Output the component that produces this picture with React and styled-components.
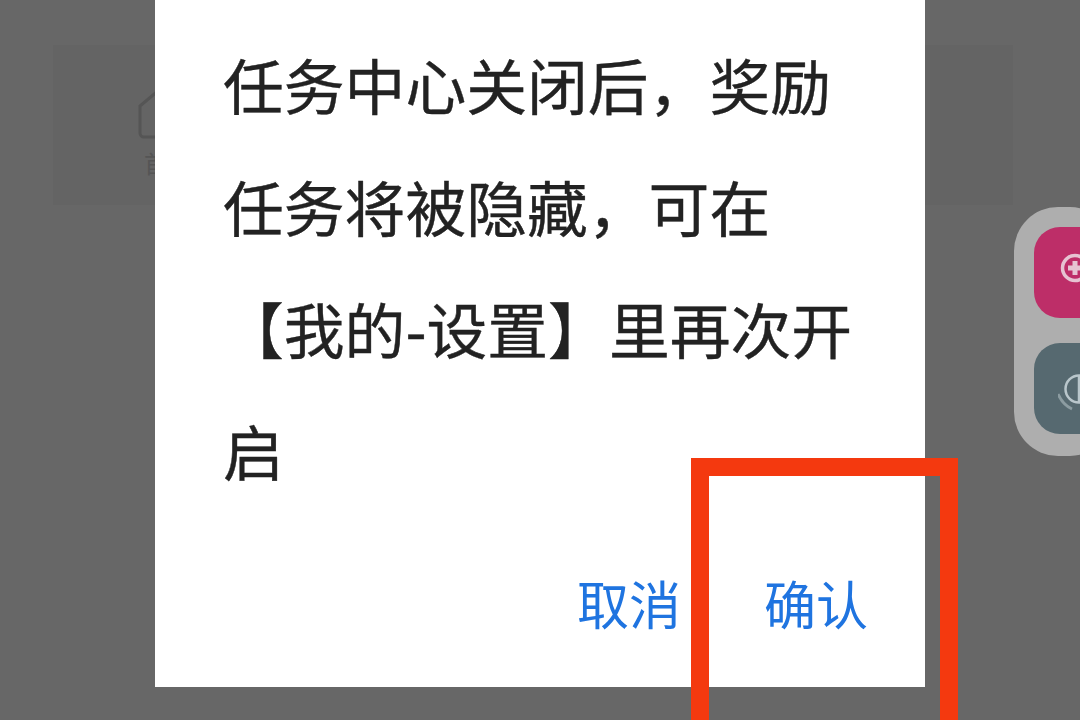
import React from 'react';
import styled, { createGlobalStyle } from 'styled-components';

const GlobalStyle = createGlobalStyle`
  html, body {
    margin: 0;
    padding: 0;
    background: #666666;
  }
`;

const Page = styled.div`
  position: relative;
  width: 1080px;
  height: 720px;
  overflow: hidden;
  padding: 45px 0 0 53px;
  box-sizing: border-box;
  background: #676767;
  font-family: "Noto Sans CJK SC", "Noto Sans", sans-serif;
`;

const TabCard = styled.div`
  display: flex;
  align-items: flex-start;
  width: 960px;
  height: 160px;
  padding: 43px 0 0 85px;
  box-sizing: border-box;
  background: #646464;
`;

const HomeTab = styled.div`
  display: flex;
  flex-direction: column;
  gap: 10px;
  color: #555;
  font-size: 24px;
  line-height: 26px;

  span {
    margin-left: 6px;
  }
`;

const Dialog = styled.div`
  position: absolute;
  left: 155px;
  top: 0;
  width: 770px;
  height: 687px;
  padding: 23px 0 0 68px;
  box-sizing: border-box;
  background: #fff;
`;

const Message = styled.p`
  width: 640px;
  margin: 0;
  color: #222;
  font-size: 60.8px;
  line-height: 122px;
  -webkit-text-stroke: 0.4px #222;
`;

const Actions = styled.div`
  position: absolute;
  right: 57px;
  bottom: 48px;
  display: flex;
  gap: 83px;
`;

const ActionButton = styled.button`
  padding: 0;
  border: 0;
  background: none;
  color: #1f74e0;
  font-family: inherit;
  font-size: 52px;
  line-height: 72px;
`;

const FloatDock = styled.div`
  position: absolute;
  left: 1014px;
  top: 207px;
  display: flex;
  flex-direction: column;
  gap: 25px;
  width: 100px;
  height: 249px;
  padding: 20px 0 0 20px;
  box-sizing: border-box;
  border-radius: 44px;
  background: #aeaeae;
`;

const DockButton = styled.div`
  display: flex;
  align-items: center;
  width: 90px;
  height: 91px;
  padding-left: 24px;
  box-sizing: border-box;
  border-radius: 26px;
  background: ${(p) => p.$color};
`;

const Highlight = styled.div`
  position: absolute;
  left: 691px;
  top: 458px;
  width: 267px;
  height: 300px;
  box-sizing: border-box;
  border: 18px solid #f4390f;
`;

const App = () => {
  return (
    <Page>
      <GlobalStyle />
      <TabCard>
        <HomeTab>
          <svg width="44" height="52" viewBox="0 0 44 52" fill="none" stroke="#555" strokeWidth="3">
            <path d="M2 18 L21 2 L41 18 V46 a3 3 0 0 1 -3 3 H6 a4 4 0 0 1 -4 -4 Z" />
          </svg>
          <span>首页</span>
        </HomeTab>
      </TabCard>
      <Dialog>
        <Message>任务中心关闭后，奖励任务将被隐藏，可在【我的-设置】里再次开启</Message>
        <Actions>
          <ActionButton>取消</ActionButton>
          <ActionButton>确认</ActionButton>
        </Actions>
      </Dialog>
      <FloatDock>
        <DockButton $color="#bd2e68">
          <svg width="46" height="60" viewBox="0 0 46 60" fill="none" stroke="#e6c3d2">
            <circle cx="17" cy="25" r="12.5" strokeWidth="3.5" />
            <path d="M10 25 H24 M17 18 V32" strokeWidth="5" />
          </svg>
        </DockButton>
        <DockButton $color="#566970">
          <svg width="46" height="60" viewBox="0 0 46 60" fill="none" stroke="#b9c6cb" strokeWidth="2.5">
            <circle cx="21" cy="30" r="13.5" />
            <path d="M21 16.5 V43.5" />
            <path d="M0 35 Q5 46 14 50" stroke="#8c9ca1" strokeWidth="3" />
          </svg>
        </DockButton>
      </FloatDock>
      <Highlight />
    </Page>
  );
};

export default App;
